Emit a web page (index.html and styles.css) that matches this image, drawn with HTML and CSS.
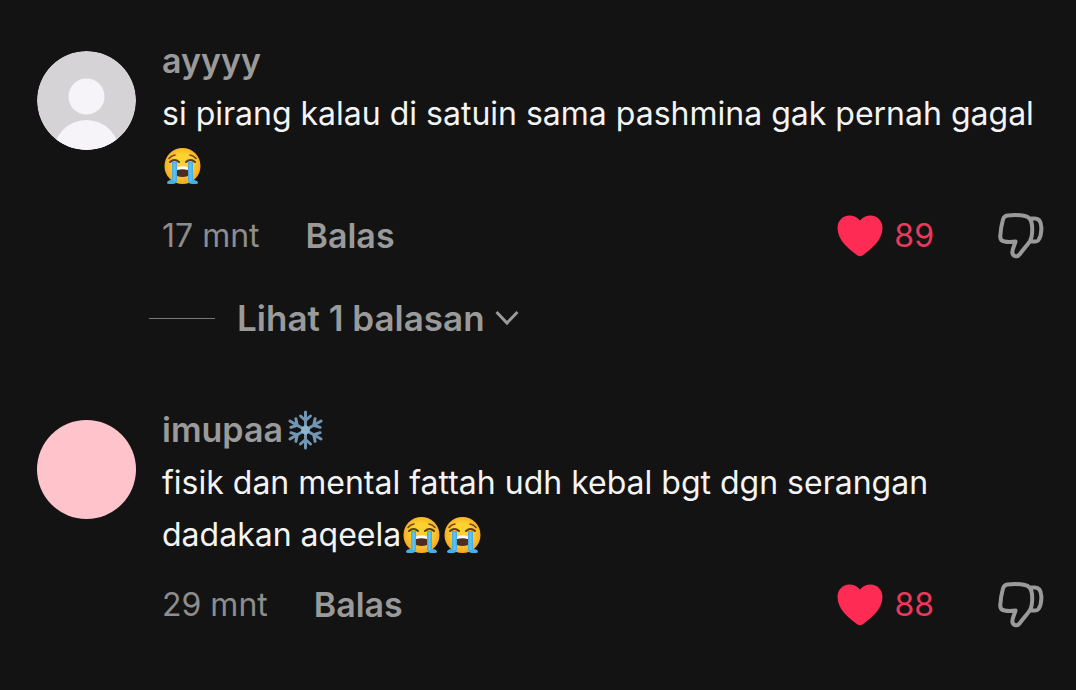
FILE: index.html
```html
<!DOCTYPE html>
<html lang="id">
<head>
<meta charset="utf-8">
<meta name="viewport" content="width=device-width, initial-scale=1">
<title>Komentar</title>
<link rel="stylesheet" href="styles.css">
</head>
<body>
<svg class="defs" aria-hidden="true">
  <defs>
    <radialGradient id="face" cx="50%" cy="45%" r="55%">
      <stop offset="0.5" stop-color="#fdd12f"/>
      <stop offset="1" stop-color="#f6a623"/>
    </radialGradient>
    <symbol id="sob" viewBox="0 0 40 40">
      <circle cx="20" cy="20" r="18" fill="url(#face)"/>
      <path d="M6.500 12.500Q9 9.500 12.500 9M33.500 12.500Q31 9.500 27.500 9" fill="none" stroke="#6d4325" stroke-width="1.500" stroke-linecap="round"/>
      <path d="M14.500 22Q20 19.500 25.500 22V30Q20 32 14.500 30Z" fill="#4f2d1c"/>
      <path d="M14.500 21.500Q20 19 25.500 21.500V24Q20 22.500 14.500 24Z" fill="#fff"/>
      <path d="M9.500 16H14.500V32Q15.500 38 10 38H6.500Q3.500 37.500 5 35.500Q6.500 33.500 9.500 34ZM30.500 16H25.500V32Q24.500 38 30 38H33.500Q36.500 37.500 35 35.500Q33.500 33.500 30.500 34Z" fill="#45b0e6"/>
      <path d="M12 17V35M28 17V35" stroke="#65c3ee" stroke-width="2"/>
      <path d="M7.500 16Q12 12 16.500 16M32.500 16Q28 12 23.500 16" fill="none" stroke="#5a3821" stroke-width="2" stroke-linecap="round"/>
    </symbol>
    <symbol id="flake-arm" viewBox="0 0 40 40">
      <path d="M20 20V2M20 10.500L15 6M20 10.500L25 6" fill="none" stroke="#7196b3" stroke-width="3" stroke-linecap="round"/>
    </symbol>
    <symbol id="flake" viewBox="0 0 40 40">
      <use href="#flake-arm"/>
      <use href="#flake-arm" transform="rotate(60 20 20)"/>
      <use href="#flake-arm" transform="rotate(120 20 20)"/>
      <use href="#flake-arm" transform="rotate(180 20 20)"/>
      <use href="#flake-arm" transform="rotate(240 20 20)"/>
      <use href="#flake-arm" transform="rotate(300 20 20)"/>
      <path d="M20 15L24.300 17.500V22.500L20 25L15.700 22.500V17.500Z" fill="#8fb2cb"/>
    </symbol>
    <symbol id="heart" viewBox="0 0 46 42">
      <path d="M23 5.500C19.500 1.500 16 .5 12.500 .5C5.500 .5 .5 6 .5 13C.5 25 12 34.500 20.500 40.500Q23 42 25.500 40.500C34 34.500 45.500 25 45.500 13C45.500 6 40.500 .5 33.500 .5C30 .5 26.500 1.500 23 5.500Z" fill="#fe2c55"/>
    </symbol>
    <symbol id="dislike" viewBox="0 0 46 46">
      <path d="M9.500 2.500Q20 1.500 27 3C31.500 4 33.500 7.500 34 12C34.500 18 34.800 23 32 28C29 33 24.500 37 22 41C19.500 44.500 15.500 43.500 14.500 40.500C13.500 37 16.500 33 17.500 28.500Q11 29.500 6.500 28.500C3.500 28 2 26 2.300 23Q2.800 14 5 6.500Q6 3 9.500 2.500ZM32 5.500H37C41 5.500 43 9 43.300 14C43.600 19 42.500 24 40.500 27Q39.500 28.500 37.500 28.500H32.500" fill="none" stroke="#9a9a9a" stroke-width="4" stroke-linejoin="round"/>
    </symbol>
  </defs>
</svg>
<main class="comments">
  <article class="comment">
    <svg class="avatar" viewBox="0 0 99 99" role="img" aria-label="Foto profil ayyyy">
      <clipPath id="round"><circle cx="49.500" cy="49.500" r="49.500"/></clipPath>
      <g clip-path="url(#round)">
        <path d="M0 0H99V99H0Z" fill="#d5d3d6"/>
        <circle cx="49.500" cy="45.500" r="18" fill="#f6f4f8"/>
        <circle cx="49.500" cy="102" r="33" fill="#f6f4f8"/>
      </g>
    </svg>
    <div class="content">
      <h2 class="name">ayyyy</h2>
      <p class="text">si pirang kalau di satuin sama pashmina gak pernah gagal <svg class="emoji" role="img" aria-label="menangis"><use href="#sob"/></svg></p>
      <div class="meta">
        <time class="time">17 mnt</time>
        <button class="reply" type="button">Balas</button>
        <button class="like" type="button" aria-label="Suka, 89"><svg class="heart"><use href="#heart"/></svg><span>89</span></button>
        <button class="dislike" type="button" aria-label="Tidak suka"><svg class="thumb"><use href="#dislike"/></svg></button>
      </div>
      <button class="more" type="button"><span class="rule"></span><span>Lihat 1 balasan</span><svg class="chevron" viewBox="0 0 24 16" aria-hidden="true"><path d="M1.500 2L12 13L22.500 2" fill="none" stroke="#9a9a9a" stroke-width="3"/></svg></button>
    </div>
  </article>
  <article class="comment">
    <div class="avatar plain"></div>
    <div class="content">
      <h2 class="name">imupaa<svg class="emoji" role="img" aria-label="kepingan salju"><use href="#flake"/></svg></h2>
      <p class="text">fisik dan mental fattah udh kebal bgt dgn serangan dadakan aqeela<svg class="emoji" role="img" aria-label="menangis"><use href="#sob"/></svg><svg class="emoji" role="img" aria-label="menangis"><use href="#sob"/></svg></p>
      <div class="meta">
        <time class="time">29 mnt</time>
        <button class="reply" type="button">Balas</button>
        <button class="like" type="button" aria-label="Suka, 88"><svg class="heart"><use href="#heart"/></svg><span>88</span></button>
        <button class="dislike" type="button" aria-label="Tidak suka"><svg class="thumb"><use href="#dislike"/></svg></button>
      </div>
    </div>
  </article>
</main>
</body>
</html>
```
FILE: styles.css
```css
* {
  box-sizing: border-box;
}

body {
  margin: 0;
  background: #131313;
  color: #f4f4f4;
  font: 400 32px/52px Inter, "Liberation Sans", sans-serif;
}

button {
  padding: 0;
  border: 0;
  background: none;
  color: inherit;
  font: inherit;
  cursor: pointer;
}

svg {
  flex: none;
}

.defs {
  position: absolute;
  width: 0;
  height: 0;
}

.comments {
  display: flex;
  flex-direction: column;
  gap: 68px;
  padding: 39px 32px 40px 37px;
}

.comment {
  display: flex;
  gap: 26px;
}

.avatar {
  flex: none;
  width: 99px;
  height: 99px;
  margin-top: 12px;
  border-radius: 50%;
}

.plain {
  background: #ffc4cb;
}

.content {
  flex: 1;
  min-width: 0;
}

.name {
  display: flex;
  align-items: center;
  margin: 0 0 5px;
  color: #9a9a9a;
  font-size: 34px;
  font-weight: 600;
  line-height: 44px;
}

.text {
  margin: 0;
}

.emoji {
  width: 41px;
  height: 40px;
  vertical-align: -9px;
}

.name .emoji {
  margin-left: 2px;
}

.meta {
  display: flex;
  align-items: center;
  margin-top: 18px;
  color: #8d8d8d;
}

.reply {
  margin-left: 46px;
  color: #9a9a9a;
  font-size: 34px;
  font-weight: 600;
}

.like {
  display: flex;
  align-items: center;
  gap: 11px;
  margin-left: auto;
  color: #e83a5b;
}

.heart {
  width: 46px;
  height: 42px;
}

.dislike {
  display: flex;
  margin-left: 64px;
}

.thumb {
  width: 46px;
  height: 46px;
}

.more {
  display: flex;
  align-items: center;
  margin: 34px 0 0 -13px;
  color: #9a9a9a;
  font-size: 35px;
  font-weight: 600;
  line-height: 44px;
}

.rule {
  width: 66px;
  height: 1px;
  margin-right: 22px;
  background: #777;
}

.chevron {
  width: 24px;
  height: 16px;
  margin-left: 10px;
}
```
